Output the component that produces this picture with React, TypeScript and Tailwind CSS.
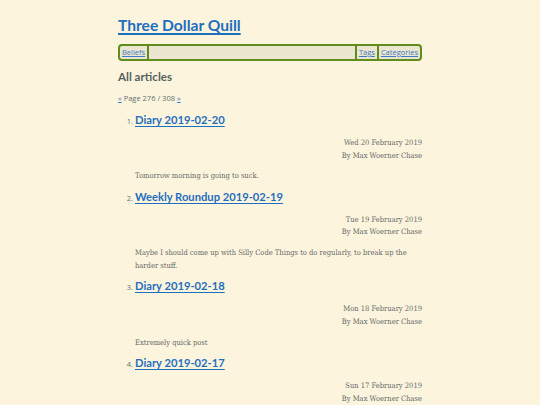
import React from "react";

const items = [
  {
    title: "Diary 2019-02-20",
    date: "Wed 20 February 2019",
    summary: "Tomorrow morning is going to suck.",
  },
  {
    title: "Weekly Roundup 2019-02-19",
    date: "Tue 19 February 2019",
    summary:
      "Maybe I should come up with Silly Code Things to do regularly, to break up the harder stuff.",
  },
  {
    title: "Diary 2019-02-18",
    date: "Mon 18 February 2019",
    summary: "Extremely quick post",
  },
  {
    title: "Diary 2019-02-17",
    date: "Sun 17 February 2019",
    summary: "",
  },
];

const sans = "font-['Open_Sans','Noto_Sans',sans-serif]";
const head = "font-['Lato','Open_Sans',sans-serif]";
const serif = "font-['DejaVu_Serif_Condensed','DejaVu_Serif',serif]";

export default function App() {
  return (
    <div className="h-[405px] w-[540px] overflow-hidden bg-[#fcf4dd]">
      <div className="mx-auto w-[304px] pt-[14px]">
        <h1 className={`${head} text-[15.6px] font-bold leading-[22px] text-[#1f6fbf]`}>
          <a href="#" className="underline decoration-[1.5px] underline-offset-[2px]">
            Three Dollar Quill
          </a>
        </h1>
        <nav
          className={`${sans} mt-[8px] flex h-[17px] items-stretch rounded-[4px] border-2 border-[#5f8d1d] bg-[#ece5d0] text-[7.5px] leading-[13px]`}
        >
          <a href="#" className="flex items-center border-r-2 border-[#5f8d1d] px-[2px] text-[#3c7cc0] underline">
            Beliefs
          </a>
          <div className="flex-1" />
          <a href="#" className="flex items-center border-l-2 border-[#5f8d1d] px-[2px] text-[#3c7cc0] underline">
            Tags
          </a>
          <a href="#" className="flex items-center border-l-2 border-[#5f8d1d] px-[2px] text-[#3c7cc0] underline">
            Categories
          </a>
        </nav>
        <h2 className={`${head} mt-[8px] text-[11.6px] font-bold leading-[15px] text-[#56625f]`}>
          All articles
        </h2>
        <p className={`${sans} mt-[8px] text-[7.5px] leading-[13px] text-[#657072]`}>
          <a href="#" className="text-[#3c7cc0] underline">«</a> Page 276 / 308{" "}
          <a href="#" className="text-[#3c7cc0] underline">»</a>
        </p>
        <ol className="mt-[7px] list-decimal pl-[17px]">
          {items.map((it, i) => (
            <li
              key={i}
              className={`${sans} mb-[6.5px] text-[7.5px] text-[#657072] marker:text-[#657072]`}
            >
              <h3 className={`${head} text-[11.2px] font-bold leading-[16px] text-[#1f6fc0]`}>
                <a href="#" className="underline decoration-[1.2px] underline-offset-[1.5px]">
                  {it.title}
                </a>
              </h3>
              <div className={`${serif} mt-[9px] text-right text-[7.5px] leading-[12.6px] text-[#676b69]`}>
                <div>{it.date}</div>
                <div>By Max Woerner Chase</div>
              </div>
              {it.summary && (
                <p className={`${serif} mt-[7px] text-[7.5px] leading-[13px] text-[#676b69]`}>
                  {it.summary}
                </p>
              )}
            </li>
          ))}
        </ol>
      </div>
    </div>
  );
}
